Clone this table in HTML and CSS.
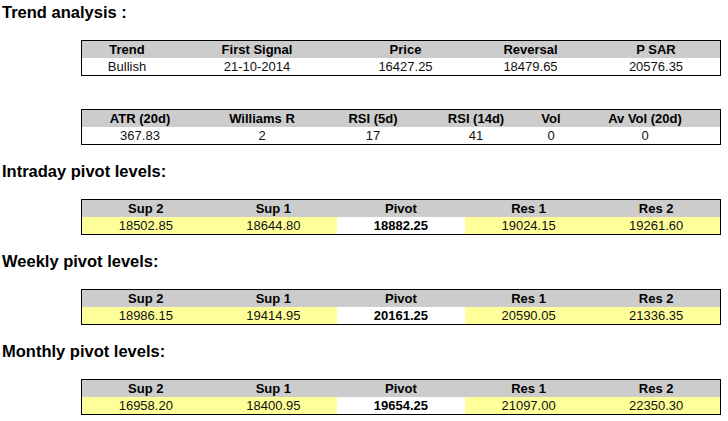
FILE: index.html
```html
<!DOCTYPE html>
<html>
<head>
<meta charset="utf-8">
<link rel="stylesheet" href="styles.css">
</head>
<body>
<div class="page">
  <h2 class="title">Trend analysis :</h2>
  <table class="grid">
    <colgroup><col class="w90"><col class="w170"><col class="w127"><col class="w123"><col class="w128"></colgroup>
    <tr class="head"><th>Trend</th><th>First Signal</th><th>Price</th><th>Reversal</th><th>P SAR</th></tr>
    <tr><td>Bullish</td><td>21-10-2014</td><td>16427.25</td><td>18479.65</td><td>20576.35</td></tr>
  </table>
  <table class="grid second">
    <colgroup><col class="w116"><col class="w128"><col class="w94"><col class="w112"><col class="w38"><col class="w150"></colgroup>
    <tr class="head"><th>ATR (20d)</th><th>Williams R</th><th>RSI (5d)</th><th>RSI (14d)</th><th>Vol</th><th>Av Vol (20d)</th></tr>
    <tr><td>367.83</td><td>2</td><td>17</td><td>41</td><td>0</td><td>0</td></tr>
  </table>

  <h2 class="title after">Intraday pivot levels:</h2>
  <table class="grid pivot">
    <tr class="head"><th>Sup 2</th><th>Sup 1</th><th>Pivot</th><th>Res 1</th><th>Res 2</th></tr>
    <tr><td class="y">18502.85</td><td class="y">18644.80</td><td class="pv">18882.25</td><td class="y">19024.15</td><td class="y">19261.60</td></tr>
  </table>

  <h2 class="title after">Weekly pivot levels:</h2>
  <table class="grid pivot">
    <tr class="head"><th>Sup 2</th><th>Sup 1</th><th>Pivot</th><th>Res 1</th><th>Res 2</th></tr>
    <tr><td class="y">18986.15</td><td class="y">19414.95</td><td class="pv">20161.25</td><td class="y">20590.05</td><td class="y">21336.35</td></tr>
  </table>

  <h2 class="title after">Monthly pivot levels:</h2>
  <table class="grid pivot">
    <tr class="head"><th>Sup 2</th><th>Sup 1</th><th>Pivot</th><th>Res 1</th><th>Res 2</th></tr>
    <tr><td class="y">16958.20</td><td class="y">18400.95</td><td class="pv">19654.25</td><td class="y">21097.00</td><td class="y">22350.30</td></tr>
  </table>
</div>
</body>
</html>
```

FILE: styles.css
```css
html, body {
  margin: 0;
  padding: 0;
  background: #ffffff;
}
.page {
  padding: 3px 0 0 2px;
  font-family: "Liberation Sans", Arial, sans-serif;
  color: #000;
}
.title {
  margin: 0;
  font-size: 16.5px;
  line-height: 19px;
  font-weight: bold;
}
.title.after {
  margin-top: 17px;
}
.grid {
  margin: 18px 0 0 79px;
  width: 640px;
  table-layout: fixed;
  border-collapse: separate;
  border-spacing: 0;
  border: 1px solid #000;
  font-size: 13px;
}
.grid.second {
  margin-top: 33px;
}
.grid th, .grid td {
  padding: 0;
  height: 17px;
  line-height: 17px;
  text-align: center;
  white-space: nowrap;
  overflow: hidden;
}
.grid th {
  background: #cccccc;
  font-weight: bold;
}
.grid td {
  font-weight: normal;
  color: #111;
}
.grid td.y {
  background: #ffff99;
}
.grid td.pv {
  background: #ffffff;
  font-weight: bold;
  color: #000;
}
.w90 { width: 90px; }
.w170 { width: 170px; }
.w127 { width: 127px; }
.w123 { width: 123px; }
.w128 { width: 128px; }
.w116 { width: 116px; }
.w94 { width: 94px; }
.w112 { width: 112px; }
.w38 { width: 38px; }
.w150 { width: 150px; }
```
